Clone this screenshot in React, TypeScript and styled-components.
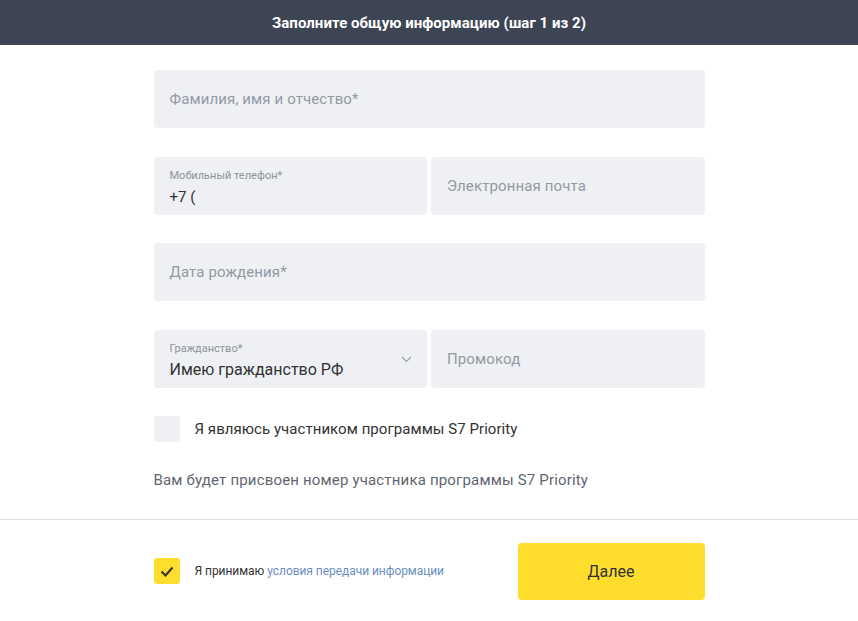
import React from "react";
import styled, { createGlobalStyle } from "styled-components";

const Global = createGlobalStyle`
  html, body { margin: 0; padding: 0; background: #fff; }
  body { font-family: Roboto, "Noto Sans", Arial, sans-serif; color: #333; }
  * { box-sizing: border-box; }
`;

const Header = styled.header`
  height: 45px;
  background: #3d4555;
  color: #fff;
  display: flex;
  align-items: center;
  justify-content: center;
  font-size: 15px;
  font-weight: 700;
  letter-spacing: 0.05px;
`;

const Form = styled.div`
  width: 551px;
  margin: 25px auto 0;
  display: flex;
  flex-direction: column;
  gap: 28.5px;
`;

const Row = styled.div`
  display: grid;
  grid-template-columns: 1fr 1fr;
  gap: 4px;
`;

const Field = styled.div`
  position: relative;
  height: 58px;
  background: #eef0f4;
  border-radius: 4px;
  padding: 0 16px;
  display: flex;
  flex-direction: column;
  justify-content: center;
`;

const Placeholder = styled.span`
  font-size: 15px;
  letter-spacing: 0.12px;
  color: #939aa3;
`;

const Label = styled.span`
  font-size: 11px;
  color: #8d939c;
  line-height: 13px;
  margin-top: 5px;
`;

const Value = styled.span<{ $size?: number }>`
  font-size: ${(p) => p.$size ?? 15}px;
  color: #333;
  line-height: 20px;
  margin-top: 5px;
`;

const Chevron = styled.svg`
  position: absolute;
  right: 15px;
  top: 26px;
`;

const CheckRow = styled.label`
  display: flex;
  align-items: center;
  gap: 15px;
  font-size: 15px;
  letter-spacing: 0.05px;
  color: #333;
`;

const Box = styled.span<{ $checked?: boolean }>`
  width: 26px;
  height: 26px;
  flex: none;
  border-radius: 3px;
  background: ${(p) => (p.$checked ? "#ffdd2d" : "#eef0f4")};
  display: flex;
  align-items: center;
  justify-content: center;
`;

const Info = styled.p`
  margin: 0;
  font-size: 15px;
  letter-spacing: 0.17px;
  color: #5f6670;
`;

const Divider = styled.hr`
  border: none;
  border-top: 1px solid #dedfe1;
  margin: 30px 0 0;
`;

const Footer = styled.div`
  width: 551px;
  margin: 23px auto 0;
  display: flex;
  align-items: center;
  justify-content: space-between;
`;

const Small = styled.span`
  font-size: 12px;
  letter-spacing: -0.05px;
  color: #333;
`;

const Link = styled.a`
  color: #6a8fc0;
  text-decoration: none;
`;

const Button = styled.button`
  width: 187px;
  height: 57px;
  border: none;
  border-radius: 4px;
  background: #ffdd2d;
  font-family: inherit;
  font-size: 16px;
  color: #333;
`;

export default function App() {
  return (
    <>
      <Global />
      <Header>Заполните общую информацию (шаг 1 из 2)</Header>
      <Form>
        <Field>
          <Placeholder>Фамилия, имя и отчество*</Placeholder>
        </Field>
        <Row>
          <Field>
            <Label>Мобильный телефон*</Label>
            <Value>+7 (</Value>
          </Field>
          <Field>
            <Placeholder>Электронная почта</Placeholder>
          </Field>
        </Row>
        <Field>
          <Placeholder>Дата рождения*</Placeholder>
        </Field>
        <Row>
          <Field>
            <Label>Гражданство*</Label>
            <Value $size={16}>Имею гражданство РФ</Value>
            <Chevron width="11" height="7" viewBox="0 0 11 7">
              <path d="M1 1l4.5 4.5L10 1" fill="none" stroke="#9aa0a8" strokeWidth="1.2" />
            </Chevron>
          </Field>
          <Field>
            <Placeholder>Промокод</Placeholder>
          </Field>
        </Row>
        <CheckRow>
          <Box />
          Я являюсь участником программы S7 Priority
        </CheckRow>
        <Info>Вам будет присвоен номер участника программы S7 Priority</Info>
      </Form>
      <Divider />
      <Footer>
        <CheckRow>
          <Box $checked>
            <svg width="14" height="11" viewBox="0 0 14 11">
              <path d="M1.5 5.5l4 4L12.5 1.5" fill="none" stroke="#333" strokeWidth="2" />
            </svg>
          </Box>
          <Small>
            Я принимаю <Link>условия передачи информации</Link>
          </Small>
        </CheckRow>
        <Button>Далее</Button>
      </Footer>
    </>
  );
}
